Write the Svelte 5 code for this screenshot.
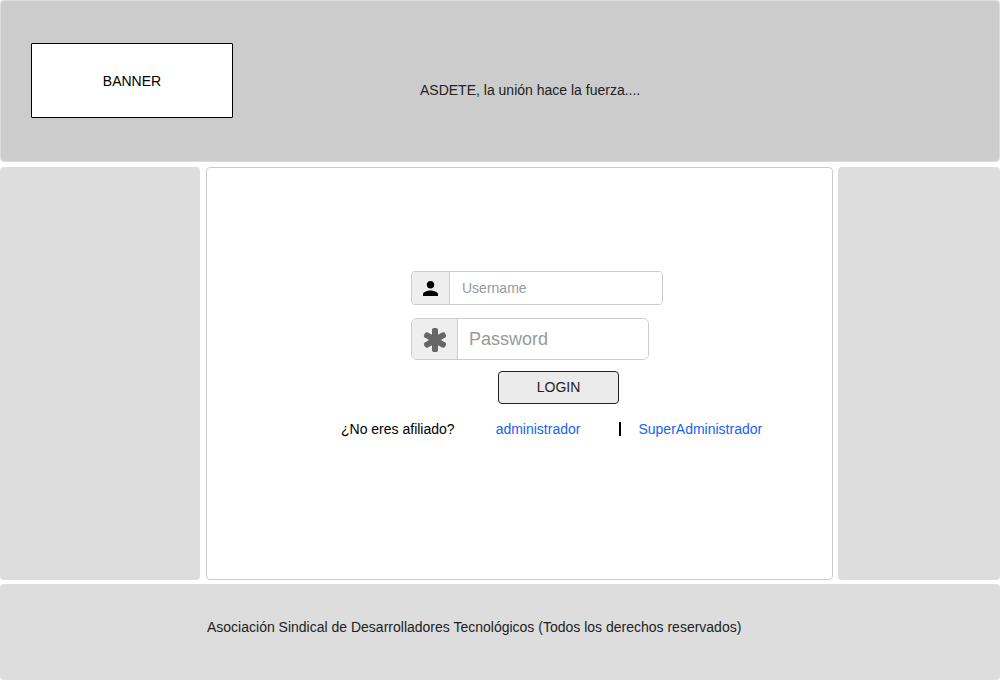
<script>
  let username = $state('');
  let password = $state('');
</script>

<div class="page">
  <header>
    <div class="banner">BANNER</div>
    <p class="slogan">ASDETE, la unión hace la fuerza....</p>
  </header>

  <div class="columns">
    <aside></aside>
    <main>
      <form onsubmit={(e) => e.preventDefault()}>
        <div class="field user">
          <label for="username" aria-label="Username">
            <svg width="15" height="15" viewBox="4 4 16 16" aria-hidden="true">
              <path
                d="M12 12c2.21 0 4-1.79 4-4s-1.79-4-4-4-4 1.79-4 4 1.79 4 4 4zm0 2c-2.67 0-8 1.34-8 4v2h16v-2c0-2.66-5.33-4-8-4z"
              />
            </svg>
          </label>
          <input id="username" type="text" placeholder="Username" bind:value={username} />
        </div>
        <div class="field pass">
          <label for="password" aria-label="Password">
            <svg width="28" height="28" viewBox="0 0 1792 1792" aria-hidden="true">
              <path
                fill="#666"
                d="M1546 1050q46 26 59.5 77.5t-12.500 97.500l-64 110q-26 46-77.500 59.500t-97.500-12.500l-266-153v307q0 52-38 90t-90 38h-128q-52 0-90-38t-38-90v-307l-266 153q-46 26-97.500 12.500t-77.500-59.500l-64-110q-26-46-12.500-97.500t59.500-77.500l266-154-266-154q-46-26-59.500-77.500t12.500-97.500l64-110q26-46 77.500-59.500t97.500 12.500l266 153v-307q0-52 38-90t90-38h128q52 0 90 38t38 90v307l266-153q46-26 97.500-12.500t77.500 59.500l64 110q26 46 12.500 97.500t-59.500 77.500l-266 154z"
              />
            </svg>
          </label>
          <input id="password" type="password" placeholder="Password" bind:value={password} />
        </div>
        <button type="submit">LOGIN</button>
        <div class="links">
          <span class="question">¿No eres afiliado?</span>
          <a class="admin" href="#administrador">administrador</a>
          <span class="divider"></span>
          <a href="#superadministrador">SuperAdministrador</a>
        </div>
      </form>
    </main>
    <aside></aside>
  </div>

  <footer>Asociación Sindical de Desarrolladores Tecnológicos (Todos los derechos reservados)</footer>
</div>

<style>
  :global(body) {
    margin: 0;
    background: #fff;
  }
  .page {
    box-sizing: border-box;
    min-height: 100vh;
    display: flex;
    flex-direction: column;
    font: 14px/20px 'Liberation Sans', Arial, sans-serif;
    color: #222;
  }
  .page * {
    box-sizing: border-box;
  }
  header {
    display: flex;
    align-items: flex-start;
    padding: 42px 30px 43px;
    border: 1px solid #ddd;
    border-radius: 4px;
    background: #ccc;
  }
  .banner {
    display: flex;
    align-items: center;
    justify-content: center;
    width: 202px;
    height: 75px;
    border: 1px solid #000;
    border-radius: 1px;
    background: #fff;
    color: #000;
  }
  .slogan {
    margin: 37px 0 0 187px;
  }
  .columns {
    flex: 1;
    display: grid;
    grid-template-columns: 206px 1fr 167px;
    margin: 5px 0 4px;
  }
  aside {
    margin-right: 6px;
    border-radius: 4px;
    background: #ddd;
  }
  main + aside {
    margin: 0 0 0 5px;
  }
  main {
    padding: 103px 20px 103px 134px;
    border: 1px solid #ccc;
    border-radius: 4px;
    background: #fff;
  }
  form {
    display: flex;
    flex-direction: column;
    align-items: flex-start;
  }
  .field {
    display: flex;
    margin-left: 70px;
    border: 1px solid #ccc;
    overflow: hidden;
  }
  .field label {
    display: flex;
    align-items: center;
    justify-content: center;
    border-right: 1px solid #ccc;
    background: #eee;
  }
  .field input {
    flex: 1;
    min-width: 0;
    padding: 0 12px;
    border: 0;
    outline: 0;
    background: #fff;
    font: inherit;
    color: #555;
  }
  .field input::placeholder {
    color: #999;
    opacity: 1;
  }
  .user {
    width: 252px;
    height: 34px;
    margin-bottom: 13px;
    border-radius: 4px;
  }
  .user label {
    width: 38px;
  }
  .pass {
    width: 238px;
    height: 42px;
    margin-bottom: 11px;
    border-radius: 6px;
    font-size: 18px;
  }
  .pass label {
    width: 46px;
    padding-top: 2px;
  }
  .pass input {
    padding: 0 11px;
  }
  button {
    width: 121px;
    height: 33px;
    margin: 0 0 15px 157px;
    padding: 0 0 2px;
    border: 1px solid #222;
    border-radius: 4px;
    background: #ebebeb;
    font: inherit;
    color: #222;
  }
  .links {
    display: flex;
    align-items: center;
  }
  .question {
    margin-right: 41px;
    color: #000;
  }
  .divider {
    width: 2px;
    height: 14px;
    margin: 0 17px 0 39px;
    background: #000;
  }
  a {
    color: #1463f3;
    text-decoration: none;
  }
  footer {
    margin-bottom: 1px;
    padding: 33px 20px 43px 207px;
    border-radius: 4px;
    background: #ddd;
  }
</style>
